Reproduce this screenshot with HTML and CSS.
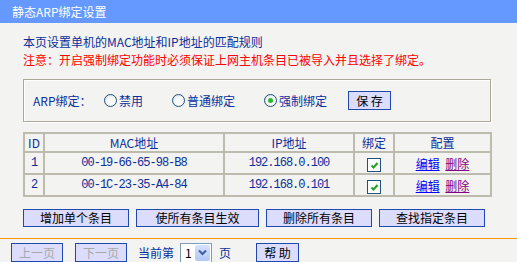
FILE: index.html
```html
<!DOCTYPE html>
<html lang="zh-CN">
<head>
    <link rel="stylesheet" href="styles.css">
    <meta charset="UTF-8">
    <title>静态ARP绑定设置</title>
</head>
<body>
<div class="title">静态ARP绑定设置</div>
<div class="main">
    <p class="info">本页设置单机的MAC地址和IP地址的匹配规则</p>
    <p class="warn">注意：开启强制绑定功能时必须保证上网主机条目已被导入并且选择了绑定。</p>

    <div class="arpbox">
        <span class="label">ARP绑定：</span>
        <span class="opt opt1"><i class="radio"></i>禁用</span>
        <span class="opt opt2"><i class="radio"></i>普通绑定</span>
        <span class="opt opt3"><i class="radio on"></i>强制绑定</span>
        <button class="btn save">保 存</button>
    </div>

    <table class="list">
        <tr class="head">
            <td class="c-id">ID</td>
            <td class="c-mac">MAC地址</td>
            <td class="c-ip">IP地址</td>
            <td class="c-bind">绑定</td>
            <td class="c-cfg">配置</td>
        </tr>
        <tr>
            <td class="num">1</td>
            <td class="num">00-19-66-65-98-B8</td>
            <td class="num">192.168.0.100</td>
            <td><i class="check"><svg width="11" height="11" viewBox="0 0 11 11"><path d="M2.5 5.5 L4.5 7.5 L8.5 3" fill="none" stroke="#21a121" stroke-width="2"/></svg></i></td>
            <td><a class="edit" href="#">编辑</a> <a class="del" href="#">删除</a></td>
        </tr>
        <tr>
            <td class="num">2</td>
            <td class="num">00-1C-23-35-A4-84</td>
            <td class="num">192.168.0.101</td>
            <td><i class="check"><svg width="11" height="11" viewBox="0 0 11 11"><path d="M2.5 5.5 L4.5 7.5 L8.5 3" fill="none" stroke="#21a121" stroke-width="2"/></svg></i></td>
            <td><a class="edit" href="#">编辑</a> <a class="del" href="#">删除</a></td>
        </tr>
    </table>

    <div class="actions">
        <button class="btn b-add">增加单个条目</button>
        <button class="btn b-all">使所有条目生效</button>
        <button class="btn b-rm">删除所有条目</button>
        <button class="btn b-find">查找指定条目</button>
    </div>
</div>
<div class="pager">
    <button class="btn pg off">上一页</button>
    <button class="btn pg off">下一页</button>
    <span class="cur">当前第</span>
    <span class="select"><span class="val">1</span><span class="arrow"><svg width="9" height="7" viewBox="0 0 9 7"><path d="M1 1.5 L4.5 5 L8 1.5" fill="none" stroke="#3b5ea8" stroke-width="2"/></svg></span></span>
    <span class="page">页</span>
    <button class="btn help">帮 助</button>
</div>
</body>
</html>
```

FILE: styles.css
```css
body {
    margin: 0;
    background: #f3f3f1;
    font-family: "Noto Sans CJK SC", sans-serif;
    font-size: 12px;
    color: #0b2f9a;
}
.title {
    height: 23px;
    line-height: 23px;
    background: #6699ff;
    color: #fff;
    padding-left: 12px;
}
.main {
    padding-left: 23px;
}
.info, .warn {
    margin: 0;
    height: 18px;
    line-height: 18px;
}
.info {
    margin-top: 10px;
}
.warn {
    color: #ff0000;
}
.arpbox {
    margin-top: 10px;
    width: 466px;
    height: 41px;
    border: 1px solid #aca899;
    box-shadow: inset 1px 1px 0 #fff, 1px 1px 0 #fff;
    display: flex;
    align-items: center;
}
.label {
    margin-left: 9px;
    width: 71px;
}
.opt {
    display: flex;
    align-items: center;
    gap: 2px;
}
.opt1 { width: 68px; }
.opt2 { width: 92px; }
.opt3 { width: 84px; }
.radio {
    display: inline-block;
    width: 11px;
    height: 11px;
    border: 1px solid #1c5180;
    border-radius: 50%;
    background: radial-gradient(circle at 60% 60%, #ffffff 30%, #d8dbdf 90%);
    position: relative;
}
.radio.on::after {
    content: "";
    position: absolute;
    left: 3px;
    top: 3px;
    width: 5px;
    height: 5px;
    border-radius: 50%;
    background: #2fb52f;
}
.btn {
    font-family: "Noto Sans CJK SC", sans-serif;
    font-size: 12px;
    color: #000;
    background: #dcdcfc;
    border: 1px solid #1f48b0;
    height: 18px;
    padding: 0;
    line-height: 14px;
}
.save {
    width: 43px;
    height: 19px;
}
.list {
    margin-top: 10px;
    width: 469px;
    border-collapse: collapse;
}
.list td {
    border: 2px solid #bdbaae;
    text-align: center;
    height: 20px;
    padding: 0;
}
.list .head td {
    height: 17px;
}
.c-id { width: 18px; }
.c-mac { width: 178px; }
.c-ip { width: 128px; }
.c-bind { width: 38px; }
.num {
    font-family: "Liberation Mono", monospace;
    font-size: 12px;
    letter-spacing: -1px;
}
.check {
    display: inline-block;
    width: 12px;
    height: 12px;
    border: 1px solid #1c5180;
    background: #fff;
    vertical-align: middle;
}
.check svg {
    display: block;
    margin: 1px 0 0 1px;
}
.edit {
    color: #0000ff;
}
.del {
    color: #800080;
    margin-left: 3px;
}
.actions {
    margin-top: 12px;
    display: flex;
    gap: 7px;
}
.b-add, .b-rm, .b-find { width: 106px; }
.b-all { width: 123px; }
.pager {
    margin-top: 11px;
    border-top: 1px solid #ff9900;
    padding: 4px 0 0 11px;
    display: flex;
    align-items: center;
    height: 19px;
}
.pg {
    width: 52px;
    height: 19px;
    margin-right: 12px;
}
.off {
    color: #a8a8a8;
}
.cur {
    margin-left: -1px;
}
.select {
    margin-left: 6px;
    width: 30px;
    height: 18px;
    border: 1px solid #7f9db9;
    background: #fff;
    display: flex;
    align-items: center;
    justify-content: space-between;
}
.val {
    color: #000;
    padding-left: 4px;
}
.arrow {
    width: 15px;
    height: 16px;
    margin-right: 1px;
    background: linear-gradient(#d5e1fd, #b3c8f5);
    border-radius: 2px;
    display: flex;
    align-items: center;
    justify-content: center;
}
.page {
    margin-left: 7px;
}
.help {
    margin-left: 25px;
    width: 43px;
    height: 19px;
}
```
